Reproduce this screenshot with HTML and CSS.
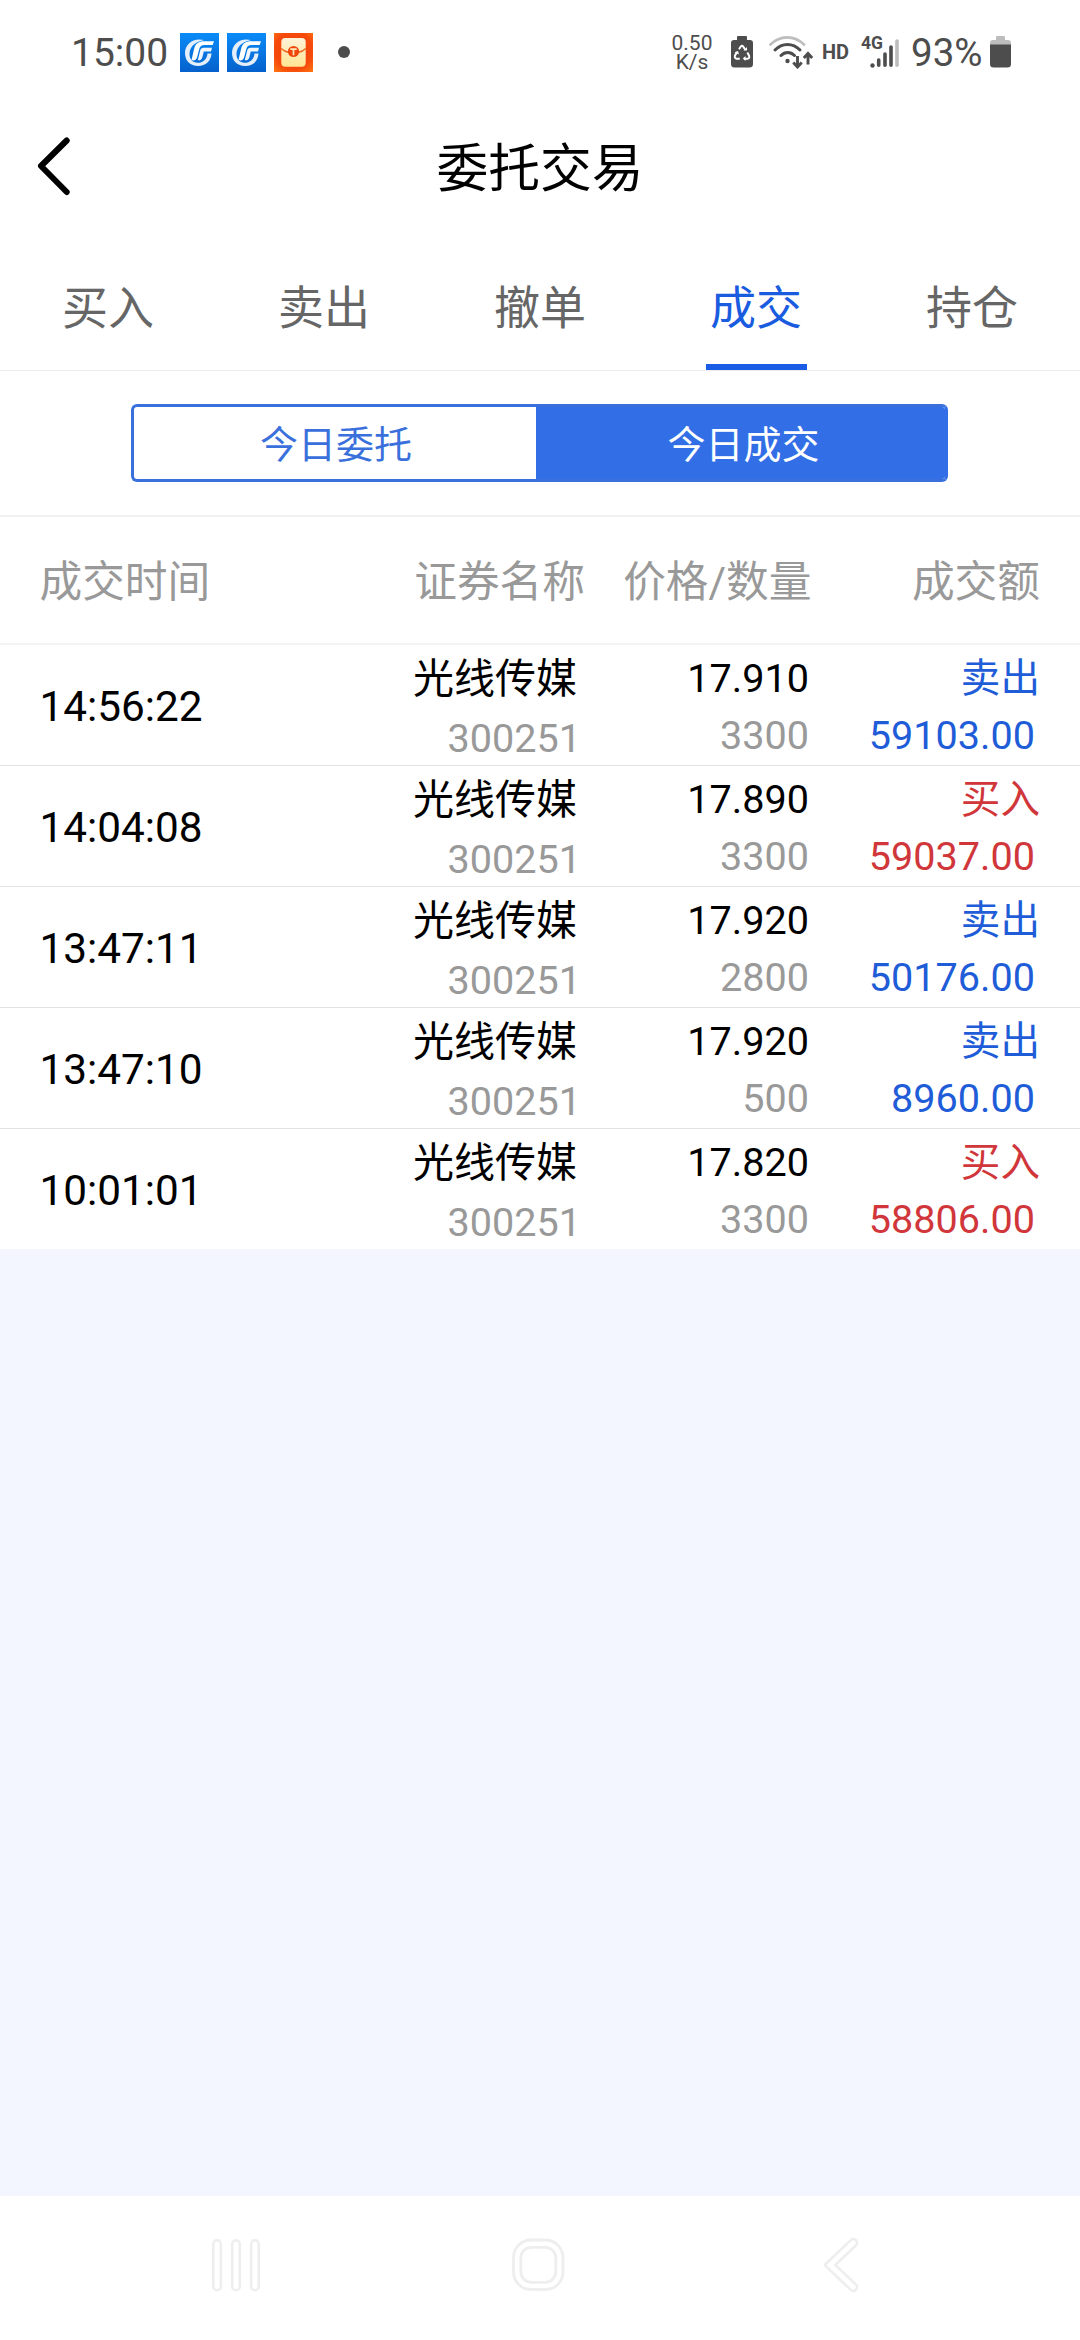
FILE: index.html
```html
<!DOCTYPE html>
<html lang="zh-CN">
<head>
<meta charset="utf-8">
<title>委托交易</title>
<link rel="stylesheet" href="styles.css">
</head>
<body>
<svg class="defs" width="0" height="0" aria-hidden="true">
  <defs>
    <linearGradient id="blue" x1="0" y1="0" x2="0" y2="1"><stop offset="0" stop-color="#0a8bf8"/><stop offset="1" stop-color="#0561cc"/></linearGradient>
    <radialGradient id="orange" cx=".5" cy=".45" r=".75"><stop offset="0" stop-color="#f03c06"/><stop offset=".65" stop-color="#f64a0c"/><stop offset="1" stop-color="#ff7a12"/></radialGradient>
    <linearGradient id="cream" x1="0" y1="0" x2="0" y2="1"><stop offset="0" stop-color="#fff3d8"/><stop offset="1" stop-color="#ffe594"/></linearGradient>
    <symbol id="broker" viewBox="0 0 39 39">
      <rect width="39" height="39" fill="url(#blue)"/>
      <path d="M24 7C13 4.500 5 11 5 20c0 8 5.500 13 13 13 8 0 13-5 13.500-12.500h-4C27 26 23.500 29.300 19 29.700 12.500 30.300 9.300 26 9.500 20.500 9.700 14 14.500 9 24 7z" fill="#e4effb"/>
      <path d="M34 8.200H24.500c-6 0-9 2.300-10.300 7.300L11.500 27c3 1.200 5-.3 5.800-3.500l1.900-7.300c.8-3 2.300-4.200 5.300-4.200H32.700z" fill="#fff"/>
      <path d="M32 14.800h-8.300c-2 0-3 .8-3.500 2.700l-2.500 9.700c2.500.5 4-.7 4.700-3.300l1.400-5.400h7.200z" fill="#eef5fd"/>
    </symbol>
  </defs>
</svg>
<header class="status">
  <span class="clock">15:00</span>
  <div class="apps">
    <svg width="39" height="39"><use href="#broker"/></svg>
    <svg width="39" height="39"><use href="#broker"/></svg>
    <svg width="39" height="39" viewBox="0 0 39 39">
      <rect width="39" height="39" fill="url(#orange)"/>
      <rect x="7.300" y="5" width="24.400" height="28.700" rx="4" fill="url(#cream)"/>
      <path d="M7.300 15.500Q10 18.500 15 19.500M31.700 15.500Q29 18.500 24 19.500" fill="none" stroke="#ee6a22" stroke-width="1.400"/>
      <circle cx="19.500" cy="18.500" r="5.600" fill="#f0460c"/>
      <path d="M16.300 16.200h6.400M19.500 16.200v6" stroke="#ffe9bd" stroke-width="1.700"/>
    </svg>
  </div>
  <i class="dot"></i>
  <div class="speed"><span>0.50</span><span>K/s</span></div>
  <svg class="saver" width="22" height="32" viewBox="0 0 22 32">
    <path d="M7 0h8q1 0 1 1v3h3q3 0 3 3v21q0 3.500-3.500 3.500h-15Q0 31.500 0 28V7q0-3 3-3h3V1q0-1 1-1z" fill="#4d4d4d"/>
    <path d="M8 13.300 9.800 10.500q1.200-1.500 2.400 0l2 3.300M16.300 16.500l1.700 3q1 3-1.500 3.200h-3.200M8.800 22.700H5.500Q3.200 22 4 19.500l2-3.300" fill="none" stroke="#fff" stroke-width="2"/>
    <path d="M12.500 14.500h3.500v-3.500zM14.500 20v5l-2.700-2.500zM3.500 16.200 7 15l1 3.500z" fill="#fff"/>
  </svg>
  <svg class="wifi" width="44" height="34" viewBox="0 0 44 34" fill="none" stroke-linecap="round" stroke="#4d4d4d" stroke-width="3">
    <path d="M1.500 9.500C11 0 25 0 35 9.500" stroke="#bdbdbd" stroke-width="2.700"/>
    <path d="M6 15c7-7.500 18-7.500 25 0M12 20.500c4-4 9.500-4 13.500 0"/>
    <circle cx="18.500" cy="26" r="2.200" fill="#4d4d4d" stroke="none"/>
    <path d="M28.500 21v11M24.300 27.500l4.200 4.500 4.200-4.500M39 29.500v-11M34.800 23l4.200-4.500 4.200 4.500" stroke-width="2.900" stroke-linecap="butt"/>
  </svg>
  <span class="hd">HD</span>
  <div class="cell"><span>4G</span>
    <svg width="30" height="34" viewBox="0 0 30 34" stroke="#4d4d4d" stroke-width="3.600" stroke-linecap="round">
      <circle cx="2.500" cy="30.500" r="2.200" fill="#4d4d4d" stroke="none"/>
      <path d="M8.700 25v5.200M15 19v11.200M21 12v18.200"/><path d="M27 6v24.200" stroke="#bdbdbd"/>
    </svg>
  </div>
  <span class="percent">93%</span>
  <svg class="battery" width="21" height="32" viewBox="0 0 21 32">
    <path d="M7 0h7q1 0 1 1v3h3q3 0 3 3v2H0V7q0-3 3-3h3V1q0-1 1-1z" fill="#bdbdbd"/>
    <path d="M0 8.500h21V28q0 3.500-3.500 3.500h-14Q0 31.500 0 28z" fill="#4d4d4d"/>
  </svg>
</header>

<div class="titlebar">
  <svg class="back" width="34" height="60" viewBox="0 0 34 60"><path d="M30.700 4.500 5 30l25.700 26" fill="none" stroke="#000" stroke-width="6" stroke-linecap="round" stroke-linejoin="round"/></svg>
  <h1>委托交易</h1>
</div>

<nav class="tabs">
  <a>买入</a><a>卖出</a><a>撤单</a><a class="active">成交</a><a>持仓</a>
</nav>

<div class="switcher">
  <div class="segment"><span>今日委托</span><span class="on">今日成交</span></div>
</div>

<main class="deals">
  <div class="row head"><span>成交时间</span><span class="name">证券名称</span><span class="price">价格/数量</span><span class="amount">成交额</span></div>
  <div class="row sell"><time>14:56:22</time><div class="name"><b>光线传媒</b><i>300251</i></div><div class="price"><b>17.910</b><i>3300</i></div><div class="amount"><b>卖出</b><i>59103.00</i></div></div>
  <div class="row buy"><time>14:04:08</time><div class="name"><b>光线传媒</b><i>300251</i></div><div class="price"><b>17.890</b><i>3300</i></div><div class="amount"><b>买入</b><i>59037.00</i></div></div>
  <div class="row sell"><time>13:47:11</time><div class="name"><b>光线传媒</b><i>300251</i></div><div class="price"><b>17.920</b><i>2800</i></div><div class="amount"><b>卖出</b><i>50176.00</i></div></div>
  <div class="row sell"><time>13:47:10</time><div class="name"><b>光线传媒</b><i>300251</i></div><div class="price"><b>17.920</b><i>500</i></div><div class="amount"><b>卖出</b><i>8960.00</i></div></div>
  <div class="row buy"><time>10:01:01</time><div class="name"><b>光线传媒</b><i>300251</i></div><div class="price"><b>17.820</b><i>3300</i></div><div class="amount"><b>买入</b><i>58806.00</i></div></div>
</main>

<footer class="navbar">
  <svg width="48" height="56" viewBox="0 0 48 56" fill="#fff" stroke="#eee" stroke-width="2.600">
    <rect x="1.300" y="3.300" width="7.600" height="50" rx="3.800"/><rect x="20.200" y="3.300" width="7.600" height="50" rx="3.800"/><rect x="39.100" y="3.300" width="7.600" height="50" rx="3.800"/>
  </svg>
  <svg class="home" width="54" height="56" viewBox="0 0 54 56" fill="#fff" stroke="#eee" stroke-width="2.800">
    <rect x="2.500" y="3" width="49.500" height="49.500" rx="17.500"/><rect x="9.800" y="10.300" width="35" height="35" rx="10.500"/>
  </svg>
  <svg width="36" height="56" viewBox="0 0 36 56" fill="none" stroke-linecap="round">
    <path d="M29.300 5.800 6 28l23.300 22.200" stroke="#eee" stroke-width="10"/>
    <path d="M29.300 5.800 6 28l23.300 22.200" stroke="#fff" stroke-width="4.800"/>
  </svg>
</footer>
</body>
</html>
```
FILE: styles.css
```css
* { box-sizing: border-box; margin: 0; padding: 0; }
html, body { height: 100%; }
body {
  display: flex;
  flex-direction: column;
  width: 1080px;
  height: 2340px;
  background: #f3f6fe;
  color: #000;
  font-family: "Roboto", "Noto Sans CJK SC", sans-serif;
}
svg { display: block; flex: none; }
b, i { font-weight: 400; font-style: normal; }
.defs { position: absolute; }

/* system status bar */
.status {
  display: flex;
  align-items: center;
  height: 104px;
  padding-left: 71px;
  background: #fff;
  color: #4d4d4d;
  white-space: nowrap;
}
.clock { width: 109px; font-size: 39px; line-height: 40px; padding-top: 1px; }
.apps { display: flex; gap: 8px; padding-top: 1px; }
.dot { width: 12px; height: 12px; margin-left: 25px; border-radius: 50%; background: #4d4d4d; }
.speed {
  display: flex;
  flex-direction: column;
  align-items: center;
  width: 44px;
  margin-left: 320px;
  padding-top: 1px;
  font-size: 21px;
  line-height: 19px;
}
.saver { margin-left: 17px; }
.wifi { margin-left: 16px; }
.hd { width: 27px; margin-left: 9px; font-size: 20px; font-weight: 700; }
.cell { display: flex; width: 38px; margin-left: 12px; }
.cell span { width: 9px; font-size: 17.500px; line-height: 17px; font-weight: 700; }
.percent { width: 78px; margin-left: 12px; font-size: 38.500px; line-height: 40px; padding-top: 1px; }
.battery { margin-left: 1px; }

/* page title */
.titlebar {
  display: grid;
  grid-template-columns: 100px 1fr 100px;
  align-items: center;
  height: 132px;
  padding-bottom: 8px;
  background: #fff;
}
.back { margin-left: 36px; }
.titlebar h1 { font-size: 51.800px; line-height: 60px; font-weight: 400; text-align: center; padding-top: 8px; }

/* trade tabs */
.tabs {
  display: grid;
  grid-template-columns: repeat(5, 1fr);
  height: 135px;
  background: #fff;
  border-bottom: 1px solid #ececec;
  font-size: 46px;
  line-height: 62px;
  color: #666;
}
.tabs a { justify-self: center; width: 101px; padding-top: 41px; text-align: center; }
.tabs .active { color: #1a5ce0; border-bottom: 6px solid #1a5ce6; }

/* orders / deals switch */
.switcher { height: 146px; padding: 33px 0 0 131px; background: #fff; border-bottom: 2px solid #f2f2f2; }
.segment {
  display: flex;
  width: 817px;
  height: 78px;
  border: 3px solid #3a70dc;
  border-right-color: #326fe6;
  border-radius: 6px;
  overflow: hidden;
  color: #3a70dc;
  font-size: 38px;
  line-height: 77px;
  text-align: center;
}
.segment span { width: 402px; padding-left: 2px; }
.segment .on { flex: 1; margin: -3px -3px -3px 0; padding: 3px 0 0 3px; background: #326fe6; color: #fff; }

/* deal list */
.row {
  display: grid;
  grid-template-columns: 400px 185px 228px 227px;
  width: 1080px;
  height: 121px;
  padding: 0 40px 0 0;
  background: #fff;
  border-bottom: 1px solid #e2e2e2;
  font-size: 39.600px;
}
.row:last-child { height: 120px; border-bottom: 0; }
.row > * { text-align: right; }
.row > :first-child { padding-left: 39.500px; text-align: left; }
.row time { font-size: 42.300px; line-height: 123px; }
.row b, .row i { display: block; }
.row i { color: #999; }
.row .name { padding-top: 5px; line-height: 59px; }
.name b { padding-right: 8px; font-size: 41px; }
.name i { padding-right: 4px; }
.row .price, .row .amount { padding-top: 5px; line-height: 57px; }
.row div.price { padding-right: 4px; }
.amount i { padding-right: 5px; }
.sell .amount, .sell .amount i { color: #1f5cd8; }
.buy .amount, .buy .amount i { color: #d0363a; }
.row.head { height: 128px; border-bottom: 2px solid #f2f3f5; color: #999; font-size: 42.700px; white-space: nowrap; }
.row.head > span { padding-top: 3px; line-height: 124px; }
.row.head .price { padding-right: 1.500px; }

/* system navigation */
.navbar {
  display: flex;
  align-items: center;
  height: 144px;
  margin-top: auto;
  padding: 0 220px 6px 212px;
  justify-content: space-between;
  background: #fff;
}
.home { margin-right: 8px; }
```
